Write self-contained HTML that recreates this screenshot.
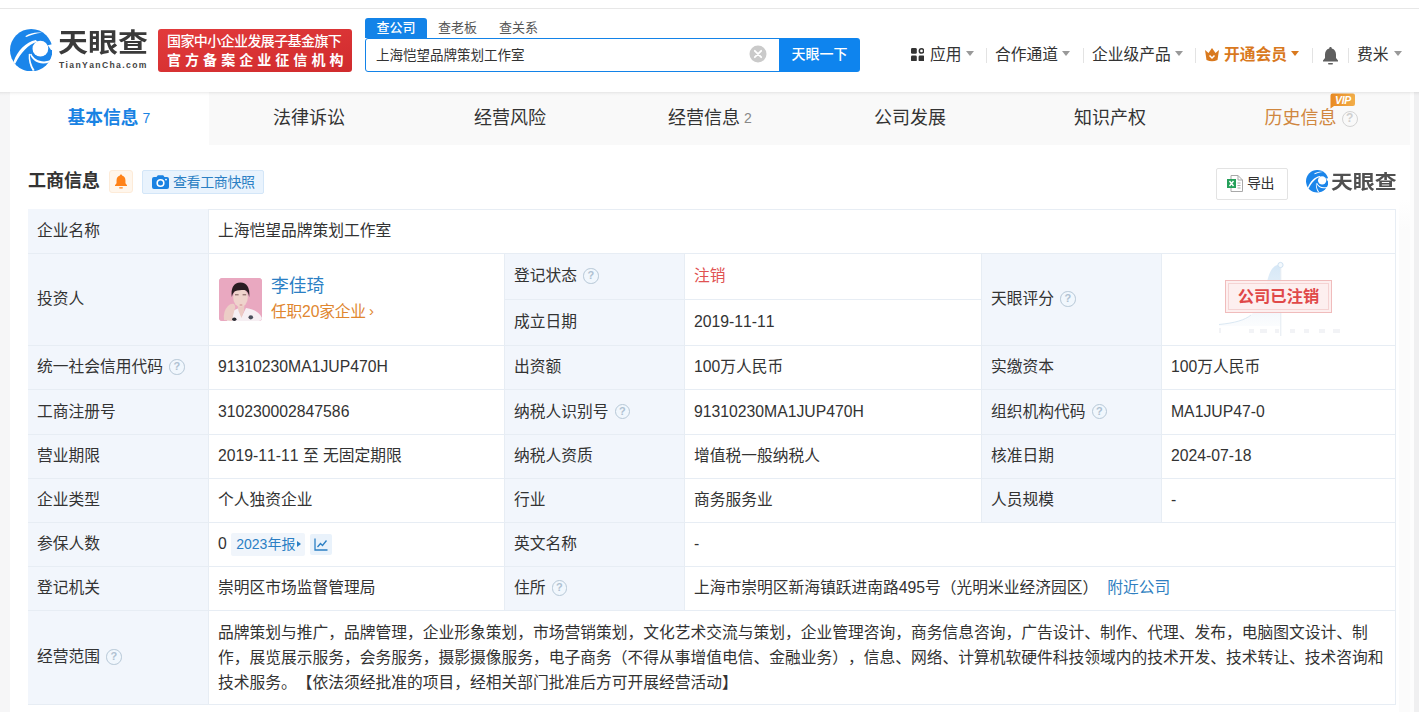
<!DOCTYPE html>
<html lang="zh-CN">
<head>
<meta charset="utf-8">
<title>天眼查</title>
<style>
*{box-sizing:border-box;margin:0;padding:0}
html,body{width:1419px;height:712px;overflow:hidden;background:#f6f6f7}
body{position:relative;text-spacing-trim:space-all;font-kerning:none;font-family:"Liberation Sans","Noto Sans CJK SC",sans-serif;color:#333;font-size:16px}
.abs{position:absolute}
/* header */
#topstrip{left:0;top:0;width:1419px;height:8px;background:#fff}
#header{left:0;top:8px;width:1419px;height:83.5px;background:#fff;border-top:1px solid #e7e7e7;}
#logoText{left:58px;top:25px;font-size:26.2px;line-height:36px;font-weight:700;color:#3a3a3a;letter-spacing:0px;white-space:nowrap;transform:scaleX(1.145);transform-origin:0 0}
#logoSub{left:59px;top:59px;font-size:8.6px;line-height:12px;font-weight:700;color:#444;letter-spacing:1.36px;white-space:nowrap}
#badge{left:158px;top:29px;width:194px;height:43px;background:linear-gradient(170deg,#e23b3c,#d02b2d);border-radius:3px;color:#fff;font-weight:700;white-space:nowrap}
#badge div{position:absolute;left:9px;line-height:18px}
#stabs{left:365px;top:18px;height:20px;font-size:13px;line-height:19px;white-space:nowrap}
#stabs span{display:inline-block;height:20px;vertical-align:top}
#stab1{background:#1383e8;color:#fff;width:62px;text-align:center;border-radius:3px 3px 0 0;font-weight:500}
#sbox{left:365px;top:38px;width:415px;height:33.5px;border:1px solid #1383e8;border-radius:3px 0 0 3px;background:#fff;font-size:13.5px;line-height:33px;padding-left:10px;color:#333}
#sbtn{left:779px;top:38px;width:81px;height:33.5px;background:#0e84ee;border-radius:0 3px 3px 0;color:#fff;font-size:14px;line-height:33px;text-align:center;font-weight:500}
.nav{top:44px;font-size:15.75px;line-height:22px;color:#333;white-space:nowrap}
.caret{display:inline-block;width:0;height:0;border-left:4.5px solid transparent;border-right:4.5px solid transparent;border-top:5px solid #999;vertical-align:middle;margin-left:4px;position:relative;top:-2px}
.vsep{top:48px;width:1px;height:15px;background:#e3e3e3}
/* tabs */
#tabsbar{left:10px;top:92px;width:1400px;height:53px;background:#f9f9f9}
#tabActive{left:10px;top:92px;width:199px;height:53px;background:#fff}
.tab{top:104.8px;font-size:18px;line-height:26px;color:#333;white-space:nowrap}
.tab small{font-size:14px;color:#888;margin-left:4px;position:relative;top:-1px}
/* card */
#card{left:10px;top:145px;width:1400px;height:567px;background:#fff}
#secTitle{left:28px;top:168px;font-size:18px;line-height:26px;font-weight:700;color:#333;white-space:nowrap}
/* table */
.c{position:absolute;border-right:1px solid #e7edf4;border-bottom:1px solid #e7edf4;padding-bottom:1px;font-size:15.75px;line-height:22px;color:#333;padding-left:9px;display:flex;align-items:center;white-space:nowrap}
.l{background:#f2f6fc}
.q{display:inline-block;width:15.5px;height:15.5px;border:1.7px solid #b7c8d7;border-radius:50%;color:#afc1d1;background:rgba(240,248,253,.6);font-size:11px;line-height:12px;font-weight:700;text-align:center;margin-left:6px;font-family:"Liberation Sans",sans-serif}

.yr{display:inline-block;margin-left:4px;height:23px;line-height:23px;padding:0 3.5px 0 5.5px;background:#f0f5fb;color:#2b7fc4;font-size:14px;border-radius:2px}
.yr i{display:inline-block;width:0;height:0;border-top:3.5px solid transparent;border-bottom:3.5px solid transparent;border-left:4.5px solid #2b7fc4;margin-left:2px;vertical-align:middle;position:relative;top:-1px}
.chart{display:inline-flex;align-items:center;justify-content:center;margin-left:5.5px;width:22px;height:21px;background:#e9f2fb;border-radius:2px}
.scope{white-space:nowrap;line-height:25px;font-size:15.75px}
</style>
</head>
<body>
<div class="abs" id="topstrip"></div>
<div class="abs" id="header"></div>

<!-- logo -->
<svg class="abs" style="left:10px;top:29px" width="42.4" height="42.4" viewBox="118 104.5 502 502">
  <circle cx="369" cy="355.5" r="251" fill="#1b85ea"/>
  <path d="M298,190 C360,150 430,138 497,150 C430,158 370,172 312,200 Z" fill="#fff"/>
  <path d="M158,497 C210,360 300,262 425,236 L442,256 C330,288 246,388 180,516 Z" fill="#fff"/>
  <circle cx="478" cy="337" r="93" fill="#fff"/>
  <path d="M566,296 L645,280 L645,352 L604,353 Z" fill="#fff"/>
  <path d="M372,398 C402,470 492,510 594,476 L586,498 C480,536 386,492 354,404 Z" fill="#fff"/>
  <path d="M354,398 C352,470 372,540 410,592 L388,601 C350,540 334,470 340,400 Z" fill="#fff"/>
</svg>
<div class="abs" id="logoText">天眼查</div>
<div class="abs" id="logoSub">TianYanCha.com</div>
<div class="abs" id="badge">
  <div style="top:3px;font-size:14px;letter-spacing:-.6px;font-weight:500">国家中小企业发展子基金旗下</div>
  <div style="top:22px;font-size:14px;letter-spacing:4.05px">官方备案企业征信机构</div>
</div>

<!-- search -->
<div class="abs" id="stabs"><span id="stab1">查公司</span><span style="margin-left:11px;color:#555">查老板</span><span style="margin-left:22px;color:#555">查关系</span></div>
<div class="abs" id="sbox">上海恺望品牌策划工作室</div>
<svg class="abs" style="left:749px;top:45px" width="18" height="18" viewBox="0 0 18 18"><circle cx="9" cy="9" r="8.5" fill="#cacaca"/><path d="M5.8 5.8 L12.2 12.2 M12.2 5.8 L5.8 12.2" stroke="#fff" stroke-width="1.8" stroke-linecap="round"/></svg>
<div class="abs" id="sbtn">天眼一下</div>

<!-- nav -->
<svg class="abs" style="left:911px;top:48px" width="13.4" height="13.4" viewBox="0 0 15 15"><rect x="0" y="0" width="6.5" height="6.5" rx="1.5" fill="#333"/><rect x="0" y="8.5" width="6.5" height="6.5" rx="1.5" fill="#333"/><rect x="8.5" y="8.5" width="6.5" height="6.5" rx="1.5" fill="#333"/><circle cx="11.75" cy="3.25" r="2.4" fill="none" stroke="#333" stroke-width="1.7"/></svg>
<div class="abs nav" style="left:930px">应用<i class="caret"></i></div>
<div class="abs vsep" style="left:986px"></div>
<div class="abs nav" style="left:995px">合作通道<i class="caret"></i></div>
<div class="abs vsep" style="left:1083px"></div>
<div class="abs nav" style="left:1092px">企业级产品<i class="caret"></i></div>
<div class="abs vsep" style="left:1195px"></div>
<svg class="abs" style="left:1204px;top:47px" width="16" height="15" viewBox="0 0 16 15"><path d="M1 3 L4.5 6 L8 1 L11.5 6 L15 3 L13.5 13 Q8 15.5 2.5 13 Z" fill="#d9791e"/><path d="M5.5 8.5 L8 11 L10.5 8.5" fill="none" stroke="#fff" stroke-width="1.5"/></svg>
<div class="abs nav" style="left:1224px;color:#d9791e;font-weight:700">开通会员<i class="caret" style="border-top-color:#d9791e"></i></div>
<div class="abs vsep" style="left:1312px"></div>
<svg class="abs" style="left:1322px;top:46px" width="17" height="19" viewBox="0 0 17 19"><path d="M8.5 1 C9.3 1 9.8 1.6 9.8 2.4 C12.6 3.2 14 5.5 14 8.5 L14 12 L16 14.5 L16 15.5 L1 15.5 L1 14.5 L3 12 L3 8.5 C3 5.5 4.4 3.2 7.2 2.4 C7.2 1.6 7.7 1 8.5 1 Z" fill="#5f5f5f"/><rect x="6" y="17" width="5" height="1.6" rx=".8" fill="#5f5f5f"/></svg>
<div class="abs vsep" style="left:1348px"></div>
<div class="abs nav" style="left:1357px">费米<i class="caret" style="margin-left:5px"></i></div>

<!-- tabs -->
<div class="abs" id="tabsbar"></div>
<div class="abs" id="tabActive"></div>
<div class="abs tab" style="left:67.5px;color:#1983e3;font-weight:700;font-size:17.75px">基本信息<small style="color:#1983e3;font-weight:400">7</small></div>
<div class="abs tab" style="left:273px">法律诉讼</div>
<div class="abs tab" style="left:474px">经营风险</div>
<div class="abs tab" style="left:668px">经营信息<small>2</small></div>
<div class="abs tab" style="left:874px">公司发展</div>
<div class="abs tab" style="left:1074px">知识产权</div>
<div class="abs tab" style="left:1264.5px;color:#d0873f;letter-spacing:0">历史信息</div>
<div class="abs" style="left:1341.5px;top:110.5px;width:16.5px;height:16.5px;border:1.8px solid #d4d4d4;border-radius:50%;color:#d0d0d0;font-size:12px;line-height:13px;font-weight:700;text-align:center;font-family:'Liberation Sans',sans-serif">?</div>
<svg class="abs" style="left:1330px;top:93px" width="26" height="16" viewBox="0 0 26 16"><defs><linearGradient id="vg" x1="0" y1="0" x2="1" y2="0"><stop offset="0" stop-color="#e98a22"/><stop offset="1" stop-color="#f2ae4a"/></linearGradient></defs><path d="M2.5 .5 H23 Q25 .5 25 2.5 V11 Q25 13 23 13 H4 L.5 15.5 V2.5 Q.5 .5 2.5 .5 Z" fill="url(#vg)"/><text x="13" y="10.6" font-family="Liberation Sans, sans-serif" font-size="10.5" font-weight="700" font-style="italic" fill="#fff" text-anchor="middle" letter-spacing="-.3">VIP</text></svg>

<div class="abs" style="left:1410px;top:92px;width:4px;height:620px;background:#fdfdfd"></div>
<div class="abs" style="left:1414px;top:92px;width:5px;height:620px;background:#f0f0f1"></div>
<!-- card -->
<div class="abs" id="card"></div>
<div class="abs" style="left:1399px;top:200px;width:11px;height:512px;background:linear-gradient(#fff,#fbfbfb 30px)"></div>
<div class="abs" id="secTitle">工商信息</div>

<!-- table -->
<div id="tbl">
<div class="abs" style="left:28px;top:209px;width:1367px;height:1px;background:#e7edf4"></div>
<div class="abs" style="left:28px;top:209px;width:1px;height:496px;background:#e7edf4"></div>
<div class="c l" style="left:28px;top:209px;width:181px;height:45px;">企业名称</div>
<div class="c" style="left:209px;top:209px;width:1187px;height:45px;">上海恺望品牌策划工作室</div>
<div class="c l" style="left:28px;top:254px;width:181px;height:92px;">投资人</div>
<div class="c" style="left:209px;top:254px;width:296px;height:92px;"></div>
<div class="c l" style="left:505px;top:254px;width:180px;height:46px;">登记状态<span class="q">?</span></div>
<div class="c" style="left:685px;top:254px;width:297px;height:46px;"><span style="color:#e05252">注销</span></div>
<div class="c l" style="left:505px;top:300px;width:180px;height:46px;">成立日期</div>
<div class="c" style="left:685px;top:300px;width:297px;height:46px;">2019-11-11</div>
<div class="c l" style="left:982px;top:254px;width:180px;height:92px;">天眼评分<span class="q">?</span></div>
<div class="c" style="left:1162px;top:254px;width:234px;height:92px;"></div>
<div class="c l" style="left:28px;top:346px;width:181px;height:44px;">统一社会信用代码<span class="q">?</span></div>
<div class="c" style="left:209px;top:346px;width:296px;height:44px;">91310230MA1JUP470H</div>
<div class="c l" style="left:505px;top:346px;width:180px;height:44px;">出资额</div>
<div class="c" style="left:685px;top:346px;width:297px;height:44px;">100万人民币</div>
<div class="c l" style="left:982px;top:346px;width:180px;height:44px;">实缴资本</div>
<div class="c" style="left:1162px;top:346px;width:234px;height:44px;">100万人民币</div>
<div class="c l" style="left:28px;top:390px;width:181px;height:45px;">工商注册号</div>
<div class="c" style="left:209px;top:390px;width:296px;height:45px;">310230002847586</div>
<div class="c l" style="left:505px;top:390px;width:180px;height:45px;">纳税人识别号<span class="q">?</span></div>
<div class="c" style="left:685px;top:390px;width:297px;height:45px;">91310230MA1JUP470H</div>
<div class="c l" style="left:982px;top:390px;width:180px;height:45px;">组织机构代码<span class="q">?</span></div>
<div class="c" style="left:1162px;top:390px;width:234px;height:45px;">MA1JUP47-0</div>
<div class="c l" style="left:28px;top:435px;width:181px;height:44px;">营业期限</div>
<div class="c" style="left:209px;top:435px;width:296px;height:44px;">2019-11-11 至 无固定期限</div>
<div class="c l" style="left:505px;top:435px;width:180px;height:44px;">纳税人资质</div>
<div class="c" style="left:685px;top:435px;width:297px;height:44px;">增值税一般纳税人</div>
<div class="c l" style="left:982px;top:435px;width:180px;height:44px;">核准日期</div>
<div class="c" style="left:1162px;top:435px;width:234px;height:44px;">2024-07-18</div>
<div class="c l" style="left:28px;top:479px;width:181px;height:44px;">企业类型</div>
<div class="c" style="left:209px;top:479px;width:296px;height:44px;">个人独资企业</div>
<div class="c l" style="left:505px;top:479px;width:180px;height:44px;">行业</div>
<div class="c" style="left:685px;top:479px;width:297px;height:44px;">商务服务业</div>
<div class="c l" style="left:982px;top:479px;width:180px;height:44px;">人员规模</div>
<div class="c" style="left:1162px;top:479px;width:234px;height:44px;">-</div>
<div class="c l" style="left:28px;top:523px;width:181px;height:44px;">参保人数</div>
<div class="c" style="left:209px;top:523px;width:296px;height:44px;">0<span class="yr">2023年报<i></i></span><span class="chart"><svg width="14" height="13" viewBox="0 0 14 13"><path d="M1 0.5 V12 H13.5" fill="none" stroke="#2b7fc4" stroke-width="1.3"/><path d="M3.5 9 L6.5 5.5 L8.5 7.5 L12.5 2.5" fill="none" stroke="#2b7fc4" stroke-width="1.3"/></svg></span></div>
<div class="c l" style="left:505px;top:523px;width:180px;height:44px;">英文名称</div>
<div class="c" style="left:685px;top:523px;width:711px;height:44px;">-</div>
<div class="c l" style="left:28px;top:567px;width:181px;height:44px;">登记机关</div>
<div class="c" style="left:209px;top:567px;width:296px;height:44px;">崇明区市场监督管理局</div>
<div class="c l" style="left:505px;top:567px;width:180px;height:44px;">住所<span class="q">?</span></div>
<div class="c" style="left:685px;top:567px;width:711px;height:44px;">上海市崇明区新海镇跃进南路495号（光明米业经济园区）<span style="color:#2f7fc1;margin-left:9px">附近公司</span></div>
<div class="c l" style="left:28px;top:611px;width:181px;height:94px;">经营范围<span class="q">?</span></div>
<div class="c" style="left:209px;top:611px;width:1187px;height:94px;"><div class="scope">品牌策划与推广，品牌管理，企业形象策划，市场营销策划，文化艺术交流与策划，企业管理咨询，商务信息咨询，广告设计、制作、代理、发布，电脑图文设计、制<br>作，展览展示服务，会务服务，摄影摄像服务，电子商务（不得从事增值电信、金融业务），信息、网络、计算机软硬件科技领域内的技术开发、技术转让、技术咨询和<br>技术服务。【依法须经批准的项目，经相关部门批准后方可开展经营活动】</div></div>
</div>

<div class="abs" style="left:0;top:91.5px;width:1419px;height:4px;background:linear-gradient(rgba(0,0,0,.075),rgba(0,0,0,.02) 50%,rgba(0,0,0,0))"></div>
<!-- section header widgets -->
<div class="abs" style="left:109px;top:170px;width:24px;height:23px;background:#fff6ec;border:1px solid #fdebd8;border-radius:3px"></div>
<svg class="abs" style="left:114px;top:174px" width="14" height="15.5" viewBox="0 0 14 16"><path d="M7 0.5 C7.7 0.5 8.1 1 8.1 1.6 C10.4 2.2 11.6 4.2 11.6 6.6 L11.6 9.6 L13.2 11.6 L13.2 12.4 L0.8 12.4 L0.8 11.6 L2.4 9.6 L2.4 6.6 C2.4 4.2 3.6 2.2 5.9 1.6 C5.9 1 6.3 0.5 7 0.5 Z" fill="#ff8218"/><rect x="5" y="13.6" width="4" height="1.4" rx=".7" fill="#ff8218"/></svg>
<div class="abs" style="left:142px;top:170px;width:122px;height:24px;background:#e9f3fd;border:1px solid #d3e6f8;border-radius:2px"></div>
<svg class="abs" style="left:152px;top:175px" width="17" height="14" viewBox="0 0 17 14"><path d="M2 2 H4.5 L5.8 0.3 H11.2 L12.5 2 H15 Q17 2 17 4 V12 Q17 14 15 14 H2 Q0 14 0 12 V4 Q0 2 2 2 Z" fill="#1a82e2"/><circle cx="8.5" cy="8" r="3.3" fill="none" stroke="#fff" stroke-width="1.6"/><circle cx="14" cy="4.6" r=".9" fill="#fff"/></svg>
<div class="abs" style="left:173px;top:171.8px;font-size:14px;line-height:21px;color:#2b7fc4;white-space:nowrap;letter-spacing:-.4px">查看工商快照</div>

<div class="abs" style="left:1216px;top:168px;width:72px;height:32px;background:#fff;border:1px solid #e3e3e3;border-radius:2px"></div>
<svg class="abs" style="left:1227px;top:175px" width="16" height="17" viewBox="0 0 16 17"><path d="M4 0.5 H11 L15.5 5 V16.5 H4 Z" fill="#fff" stroke="#a9a9a9" stroke-width="1"/><path d="M11 0.5 V5 H15.5" fill="none" stroke="#a9a9a9" stroke-width="1"/><rect x="0" y="4" width="9" height="9" fill="#26a05a"/><path d="M2.5 6 L6.5 11 M6.5 6 L2.5 11" stroke="#fff" stroke-width="1.4"/><path d="M10.5 8 H13.5 M10.5 10.5 H13.5 M10.5 13 H13.5" stroke="#a9a9a9" stroke-width="1"/></svg>
<div class="abs" style="left:1247px;top:173px;font-size:14px;line-height:20px;color:#333;white-space:nowrap;letter-spacing:-.5px">导出</div>

<svg class="abs" style="left:1305.5px;top:170px" width="22.5" height="22.5" viewBox="118 104.5 502 502">
  <circle cx="369" cy="355.5" r="251" fill="#1b85ea"/>
  <path d="M298,190 C360,150 430,138 497,150 C430,158 370,172 312,200 Z" fill="#fff"/>
  <path d="M158,497 C210,360 300,262 425,236 L442,256 C330,288 246,388 180,516 Z" fill="#fff"/>
  <circle cx="478" cy="337" r="93" fill="#fff"/>
  <path d="M566,296 L645,280 L645,352 L604,353 Z" fill="#fff"/>
  <path d="M372,398 C402,470 492,510 594,476 L586,498 C480,536 386,492 354,404 Z" fill="#fff"/>
  <path d="M354,398 C352,470 372,540 410,592 L388,601 C350,540 334,470 340,400 Z" fill="#fff"/>
</svg>
<div class="abs" style="left:1330.5px;top:168.8px;font-size:19.2px;line-height:28px;font-weight:700;color:#505050;white-space:nowrap;transform:scaleX(1.14);transform-origin:0 0">天眼查</div>

<!-- investor -->
<div class="abs" id="avatar" style="left:219px;top:278px;width:43px;height:43px;border-radius:3.5px;background:#e9a8c0;overflow:hidden">
<svg width="43" height="43" viewBox="0 0 43 43"><defs><filter id="bl" x="-10%" y="-10%" width="120%" height="120%"><feGaussianBlur stdDeviation=".55"/></filter></defs><rect width="43" height="43" fill="#e9a8c0"/><g filter="url(#bl)">
<path d="M8 43 Q10 33 20 30 L23 38 L27 30 Q40 32 43 40 L43 43 Z" fill="#f6eff3"/>
<path d="M18.5 27 L25.5 27 L25 33 L22.5 40 L19.5 33 Z" fill="#eccbc4"/>
<ellipse cx="21.5" cy="19.5" rx="7.3" ry="9.4" fill="#efd3cc"/>
<path d="M12.8 19 Q11 5 21.5 4.5 Q31.5 5 30.2 19 Q29.3 13 25.5 12 Q18 11.5 15.5 13.5 Q13.6 15.5 12.8 19 Z" fill="#2c1f24"/>
<path d="M5 42 Q4 33 9 28 Q12 25 15 26 Q17 28 15.5 32 Q14 37 13 43 Z" fill="#eccdc6"/>
<ellipse cx="15.3" cy="41.2" rx="2.2" ry="1.8" fill="#2b2b33"/>
<ellipse cx="31.8" cy="39.3" rx="2.3" ry="2.1" fill="#4b4f5c"/>
<ellipse cx="22" cy="27" rx="1.6" ry=".7" fill="#d79a98"/>
<path d="M16 16.8 h3.6 M23.6 16.8 h3.6" stroke="#6a4a48" stroke-width=".9"/>
</g></svg></div>
<div class="abs" style="left:271px;top:273px;font-size:17.75px;line-height:26px;color:#2b7fc4;white-space:nowrap">李佳琦</div>
<div class="abs" style="left:271px;top:300.7px;font-size:15.75px;line-height:22px;color:#e0862f;white-space:nowrap;letter-spacing:-.2px">任职20家企业<span style="font-size:15px;margin-left:3px;position:relative;top:-1px">›</span></div>

<!-- score stamp -->
<svg class="abs" style="left:1215px;top:260px" width="135" height="80" viewBox="0 0 135 80">
  <defs><linearGradient id="cg" x1="0" y1="0" x2="0" y2="1"><stop offset="0" stop-color="#d3e6f6" stop-opacity=".95"/><stop offset=".55" stop-color="#dfecf8" stop-opacity=".7"/><stop offset="1" stop-color="#eef4fa" stop-opacity=".25"/></linearGradient></defs>
  <path d="M4,64.5 C20,63 30,60 36,55 C45,47 50,30 53,18 C56,8 60,4.5 65.5,4.5 L65.5,66 L4,66 Z" fill="url(#cg)"/>
  <path d="M4,64.5 C20,63 30,60 36,55" fill="none" stroke="#dbe8f3" stroke-width="1"/>
  <line x1="65.8" y1="6" x2="65.8" y2="76" stroke="#e3eaf1" stroke-width="1"/>
  <circle cx="65.5" cy="5" r="2.6" fill="#f4f9fd" stroke="#cfe2f2" stroke-width="1"/>
  <g fill="#f2f3f6"><rect x="4" y="68" width="2" height="5"/><rect x="34" y="69" width="5" height="4"/><rect x="45" y="69" width="7" height="4"/><rect x="60" y="69" width="4" height="4"/><rect x="75" y="69" width="5" height="4"/><rect x="89" y="69" width="5" height="4"/><rect x="104" y="69" width="6" height="4"/><rect x="118" y="69" width="7" height="4"/></g>
</svg>
<div class="abs" style="left:1225px;top:280px;width:107px;height:33px;background:rgba(253,237,237,.9);border:1px solid #f0bcbc;outline:1px solid #f5d3d3;outline-offset:-4px;color:#e04848;font-size:16.3px;line-height:31px;font-weight:700;text-align:center;letter-spacing:0">公司已注销</div>
</body>
</html>
